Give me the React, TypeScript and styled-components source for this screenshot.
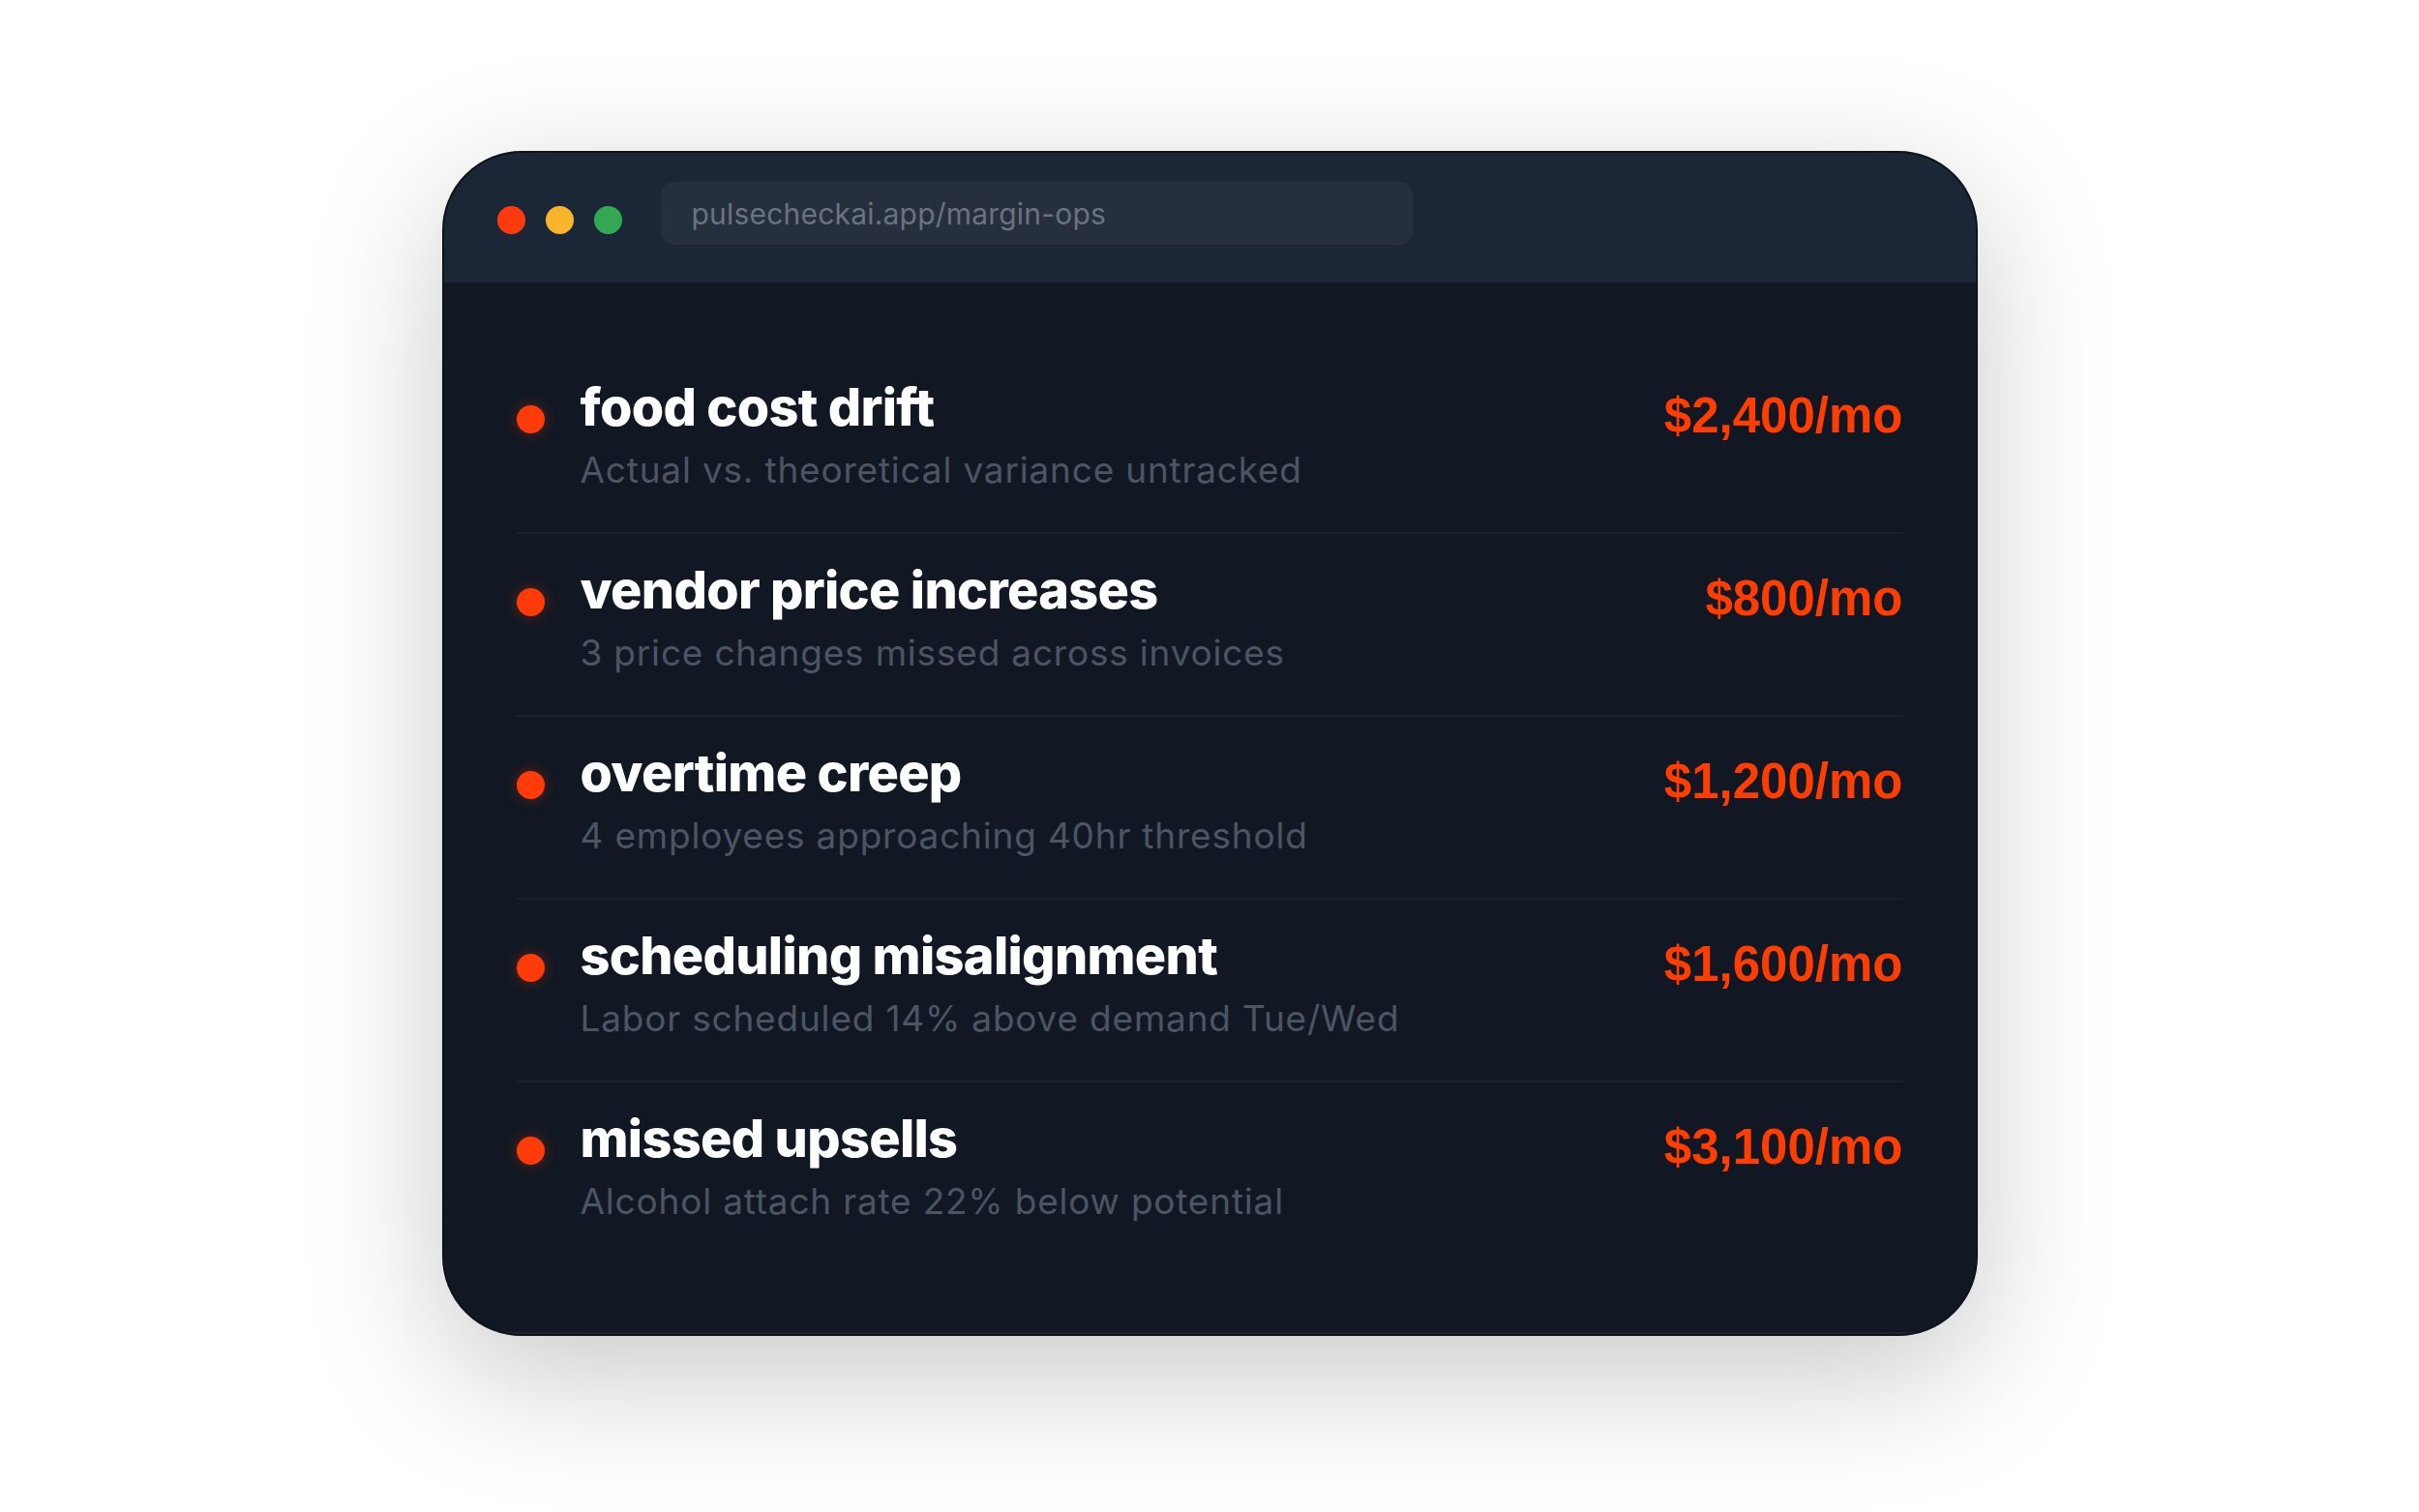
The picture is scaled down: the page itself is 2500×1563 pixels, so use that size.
import styled, { createGlobalStyle } from 'styled-components';

type Leak = {
  id: number;
  title: string;
  detail: string;
  amount: string;
};

const leaks: Leak[] = [
  {
    id: 1,
    title: 'food cost drift',
    detail: 'Actual vs. theoretical variance untracked',
    amount: '$2,400/mo',
  },
  {
    id: 2,
    title: 'vendor price increases',
    detail: '3 price changes missed across invoices',
    amount: '$800/mo',
  },
  {
    id: 3,
    title: 'overtime creep',
    detail: '4 employees approaching 40hr threshold',
    amount: '$1,200/mo',
  },
  {
    id: 4,
    title: 'scheduling misalignment',
    detail: 'Labor scheduled 14% above demand Tue/Wed',
    amount: '$1,600/mo',
  },
  {
    id: 5,
    title: 'missed upsells',
    detail: 'Alcohol attach rate 22% below potential',
    amount: '$3,100/mo',
  },
];

const App = () => {
  return (
    <>
      <GlobalStyle />
      <StyledPage>
        <StyledWindow>
          <StyledChrome>
            <StyledLights>
              <StyledLight $color="#ff3b0e" />
              <StyledLight $color="#fdb42d" />
              <StyledLight $color="#33a853" />
            </StyledLights>
            <StyledUrlBar>pulsecheckai.app/margin-ops</StyledUrlBar>
          </StyledChrome>
          <StyledBody>
            {leaks.map((leak) => (
              <StyledRow key={leak.id}>
                <StyledDot />
                <StyledText>
                  <StyledTitle>{leak.title}</StyledTitle>
                  <StyledDetail>{leak.detail}</StyledDetail>
                </StyledText>
                <StyledAmount>{leak.amount}</StyledAmount>
              </StyledRow>
            ))}
          </StyledBody>
        </StyledWindow>
      </StyledPage>
    </>
  );
};

export default App;

const GlobalStyle = createGlobalStyle`
  * {
    box-sizing: border-box;
  }
  body {
    margin: 0;
    background: #ffffff;
    font-family: Inter, 'Noto Sans', sans-serif;
  }
`;

const StyledPage = styled.div`
  width: 2500px;
  height: 1563px;
  display: flex;
  justify-content: center;
  align-items: flex-start;
  padding-top: 156px;
  background: #ffffff;
`;

const StyledWindow = styled.div`
  width: 1587px;
  border: 2px solid #0e1219;
  border-radius: 82px;
  overflow: hidden;
  background: #111823;
  box-shadow: 0 40px 140px rgba(0, 0, 0, 0.22);
`;

const StyledChrome = styled.div`
  display: flex;
  align-items: flex-start;
  gap: 40px;
  height: 134px;
  padding: 30px 0 0 55px;
  background: #1b2636;
`;

const StyledLights = styled.div`
  display: flex;
  gap: 21px;
  margin-top: 25px;
`;

const StyledLight = styled.span<{ $color: string }>`
  width: 29px;
  height: 29px;
  border-radius: 50%;
  background: ${({ $color }) => $color};
`;

const StyledUrlBar = styled.div`
  width: 777px;
  height: 65px;
  display: flex;
  align-items: center;
  padding-left: 32px;
  border-radius: 14px;
  background: #262f3e;
  color: #6b7280;
  font-family: Inter, sans-serif;
  font-size: 30px;
  letter-spacing: 0.2px;
`;

const StyledBody = styled.div`
  display: flex;
  flex-direction: column;
  padding: 71px 75px;
  border-bottom: 2px solid #1c2533;
  background: #111823;
`;

const StyledRow = styled.div`
  display: flex;
  align-items: flex-start;
  padding: 27px 0 39px;
  border-bottom: 2px solid #1a212c;

  &:last-child {
    border-bottom: none;
  }
`;

const StyledDot = styled.span`
  flex: none;
  width: 29px;
  height: 29px;
  margin-top: 29px;
  margin-right: 37px;
  border-radius: 50%;
  background: #ff3b0a;
  box-shadow: 0 0 14px rgba(255, 59, 10, 0.35);
`;

const StyledText = styled.div`
  flex: 1;
  display: flex;
  flex-direction: column;
  gap: 9px;
`;

const StyledTitle = styled.div`
  color: #ffffff;
  font-family: Inter, sans-serif;
  font-size: 54px;
  font-weight: 800;
  line-height: 62px;
  letter-spacing: -0.7px;
`;

const StyledDetail = styled.div`
  color: #4b5563;
  font-family: Inter, sans-serif;
  font-size: 37px;
  line-height: 50px;
  letter-spacing: 0.8px;
`;

const StyledAmount = styled.div`
  margin-top: 10px;
  color: #ff3d00;
  font-family: 'Liberation Sans', Arial, sans-serif;
  font-size: 51px;
  font-weight: 700;
`;
